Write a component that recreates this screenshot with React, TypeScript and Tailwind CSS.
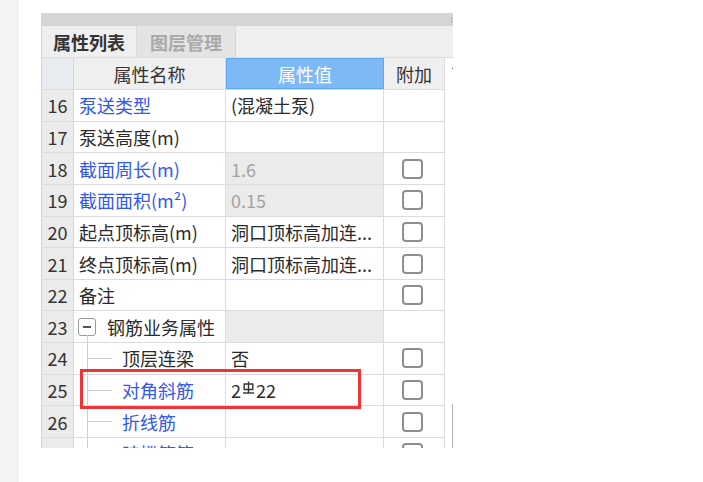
import React from 'react';

type Row = {
  no: number;
  name: string;
  value?: React.ReactNode;
  blue?: boolean;
  grayValue?: boolean;
  check?: boolean;
  level?: 'group' | 'child';
};

const rows: Row[] = [
  { no: 16, name: '泵送类型', value: '(混凝土泵)', blue: true },
  { no: 17, name: '泵送高度(m)' },
  { no: 18, name: '截面周长(m)', value: '1.6', blue: true, grayValue: true, check: true },
  { no: 19, name: '截面面积(m²)', value: '0.15', blue: true, grayValue: true, check: true },
  { no: 20, name: '起点顶标高(m)', value: '洞口顶标高加连...', check: true },
  { no: 21, name: '终点顶标高(m)', value: '洞口顶标高加连...', check: true },
  { no: 22, name: '备注', check: true },
  { no: 23, name: '钢筋业务属性', level: 'group', grayValue: true },
  { no: 24, name: '顶层连梁', value: '否', level: 'child', check: true },
  { no: 25, name: '对角斜筋', value: 'rebar', blue: true, level: 'child', check: true },
  { no: 26, name: '折线筋', blue: true, level: 'child', check: true },
  { no: 27, name: '暗撑箍筋', blue: true, level: 'child', check: true },
];

// HRB400 rebar grade mark
const RebarMark = () => (
  <svg width="13" height="14" viewBox="0 0 13 14" className="mx-[1px] -mt-[4px]">
    <path d="M2.2 3 H10.8 V8.5 H2.2 Z" fill="none" stroke="#333" strokeWidth="1.4" />
    <path d="M6.5 0.5 V12" stroke="#333" strokeWidth="1.4" />
    <path d="M1 12 H12" stroke="#333" strokeWidth="1.4" />
  </svg>
);

const Checkbox = () => (
  <div className="w-[21px] h-[20px] border-2 border-[#8e8e8e] rounded-[4px] bg-white" />
);

function NameCell({ row }: { row: Row }) {
  const color = row.blue ? 'text-[#3358ee]' : 'text-[#2b2b2b]';
  if (row.level === 'group') {
    return (
      <div className="relative flex items-center h-full pl-[4px]">
        <div className="w-[18px] h-[18px] border border-[#9a9a9a] rounded-[3px] flex items-center justify-center bg-white">
          <div className="w-[8px] h-[1.5px] bg-[#555]" />
        </div>
        <span className={`ml-[11px] ${color}`}>{row.name}</span>
        <div className="absolute left-[13px] top-[24px] bottom-0 w-px bg-[#cfcfcf]" />
      </div>
    );
  }
  if (row.level === 'child') {
    return (
      <div className="flex items-center h-full">
        <div className="ml-[13px] self-stretch w-[25px] border-l border-[#cfcfcf] flex items-center">
          <div className="h-px w-full bg-[#cfcfcf]" />
        </div>
        <span className={`ml-[10px] ${color}`}>{row.name}</span>
      </div>
    );
  }
  return (
    <div className="flex items-center h-full pl-[5px]">
      <span className={color}>{row.name}</span>
    </div>
  );
}

export default function App() {
  return (
    <div
      className="w-[703px] h-[482px] bg-white flex overflow-hidden text-[18px] leading-none"
      style={{ fontFamily: '"Noto Sans CJK SC", "Noto Sans", sans-serif' }}
    >
      <div className="w-[19px] h-full bg-[#f3f3f3]" />
      <div className="ml-[22px] mt-[13px] w-[412px] h-[435px] overflow-hidden relative flex flex-col">
        {/* title bar */}
        <div className="h-[13px] bg-[#d5d5d8] flex justify-end items-center pr-[1px] shrink-0">
          <div className="flex flex-col gap-[2px]">
            <div className="w-px h-px bg-[#888]" />
            <div className="w-px h-px bg-[#888]" />
          </div>
        </div>
        {/* tabs */}
        <div className="h-[32px] bg-[#efefef] flex border-l border-[#d6d6d6] border-b border-b-[#dcdcdc] shrink-0">
          <div className="w-[95px] flex items-center justify-center font-bold text-[#333] border-r border-[#d9d9d9]">
            属性列表
          </div>
          <div className="w-[99px] flex items-center justify-center font-bold text-[#a9a9a9] bg-[#e4e4e4] border-r border-[#d6d6d6]">
            图层管理
          </div>
        </div>
        <div className="flex flex-1">
          <div className="w-[404px] flex flex-col">
            {/* header */}
            <div className="h-[32px] flex shrink-0 border-b border-[#dcdcdc]">
              <div className="w-[33px] bg-[#e8ecf1] border-l border-r border-[#d6d6d6]" />
              <div className="w-[152px] bg-[#efefef] border-r border-[#dcdcdc] flex items-center justify-center text-[#333]">
                属性名称
              </div>
              <div className="w-[158px] bg-[#7db9f6] border border-[#5ea7f2] flex items-center justify-center text-white">
                属性值
              </div>
              <div className="w-[61px] bg-[#efefef] border-r border-[#dcdcdc] flex items-center justify-center text-[#333]">
                附加
              </div>
            </div>
            {rows.map((row) => (
              <div key={row.no} className="h-[31.65px] flex shrink-0 border-b border-[#dcdcdc]">
                <div className="w-[33px] bg-[#ebebeb] border-l border-r border-[#d6d6d6] flex items-center justify-center text-[#333]">
                  {row.no}
                </div>
                <div className="w-[152px] bg-white border-r border-[#dcdcdc]">
                  <NameCell row={row} />
                </div>
                <div
                  className={`w-[158px] border-r border-[#dcdcdc] flex items-center pl-[5px] ${
                    row.grayValue ? 'bg-[#ebebeb] text-[#a3a3a3]' : 'bg-white text-[#2b2b2b]'
                  }`}
                >
                  {row.value === 'rebar' ? (
                    <span className="flex items-center">
                      2<RebarMark />22
                    </span>
                  ) : (
                    row.value
                  )}
                </div>
                <div className="w-[61px] bg-white border-r border-[#dcdcdc] flex items-center justify-center pr-[3px]">
                  {row.check && <Checkbox />}
                </div>
              </div>
            ))}
          </div>
          {/* right edge strip */}
          <div className="w-[8px] flex flex-col bg-white">
            <div className="mt-[10px] ml-[7px] w-px h-px bg-[#666]" />
            <div className="mt-auto ml-[7px] w-px h-[66px] bg-[#b3b3b3]" />
          </div>
        </div>
        {/* highlight box */}
        <div className="absolute left-[39px] top-[356px] w-[281px] h-[40px] border-[3px] border-[#ee3437]" />
      </div>
    </div>
  );
}
